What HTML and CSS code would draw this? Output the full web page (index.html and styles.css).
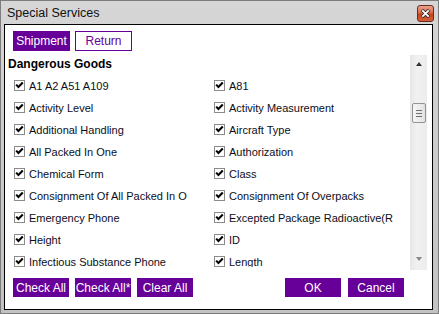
FILE: index.html
```html
<!DOCTYPE html>
<html>
<head>
<meta charset="utf-8">
<link rel="stylesheet" href="styles.css">
</head>
<body>
<div class="window">
  <div class="titlebar">
    <span class="title">Special Services</span>
    <span class="close"><svg width="9" height="9" viewBox="0 0 9 9"><path d="M1 1 L8 8 M8 1 L1 8" stroke="#3a2a2a" stroke-width="3.4"/><path d="M1.3 1.3 L7.7 7.7 M7.7 1.3 L1.3 7.7" stroke="#fff" stroke-width="1.8"/></svg></span>
  </div>
  <div class="panel">
    <div class="tabs">
      <span class="btn">Shipment</span>
      <span class="btn outline">Return</span>
    </div>
    <div class="listarea">
      <div class="list">
        <div class="heading">Dangerous Goods</div>
        <div class="grid">
          <label class="item"><span class="cb"></span>A1 A2 A51 A109</label>
          <label class="item"><span class="cb"></span>A81</label>
          <label class="item"><span class="cb"></span>Activity Level</label>
          <label class="item"><span class="cb"></span>Activity Measurement</label>
          <label class="item"><span class="cb"></span>Additional Handling</label>
          <label class="item"><span class="cb"></span>Aircraft Type</label>
          <label class="item"><span class="cb"></span>All Packed In One</label>
          <label class="item"><span class="cb"></span>Authorization</label>
          <label class="item"><span class="cb"></span>Chemical Form</label>
          <label class="item"><span class="cb"></span>Class</label>
          <label class="item"><span class="cb"></span>Consignment Of All Packed In O</label>
          <label class="item"><span class="cb"></span>Consignment Of Overpacks</label>
          <label class="item"><span class="cb"></span>Emergency Phone</label>
          <label class="item"><span class="cb"></span>Excepted Package Radioactive(R</label>
          <label class="item"><span class="cb"></span>Height</label>
          <label class="item"><span class="cb"></span>ID</label>
          <label class="item"><span class="cb"></span>Infectious Substance Phone</label>
          <label class="item"><span class="cb"></span>Length</label>
        </div>
      </div>
      <div class="scrollbar">
        <span class="arrow up"></span>
        <span class="thumb"><i></i><i></i><i></i></span>
        <span class="arrow down"></span>
      </div>
    </div>
    <div class="footer">
      <div class="group">
        <span class="btn">Check All</span>
        <span class="btn">Check All*</span>
        <span class="btn">Clear All</span>
      </div>
      <div class="group">
        <span class="btn">OK</span>
        <span class="btn">Cancel</span>
      </div>
    </div>
  </div>
</div>
</body>
</html>
```
FILE: styles.css
```css
html, body {
  margin: 0;
  padding: 0;
  background: #c8c8c8;
}
.window {
  width: 439px;
  height: 314px;
  box-sizing: border-box;
  border: 1px solid #7c7c7c;
  background: linear-gradient(to bottom, #d6d6d6 0%, #c9c9c9 60%, #c2c2c2 100%);
  display: flex;
  flex-direction: column;
  font-family: "Liberation Sans", Arial, sans-serif;
}
.titlebar {
  height: 23px;
  flex: none;
  display: flex;
  align-items: center;
  justify-content: space-between;
  padding: 0 4px 0 6px;
}
.title {
  font-family: "Liberation Sans", Arial, sans-serif;
  font-size: 12.5px;
  color: #111;
  margin-top: 1px;
}
.close {
  width: 15px;
  height: 15px;
  border: 1px solid #6b2b1c;
  border-radius: 3px;
  background: linear-gradient(to bottom, #e9a38c 0%, #d86a4c 45%, #c4431f 55%, #d5603d 100%);
  display: flex;
  align-items: center;
  justify-content: center;
  margin-top: 2px;
}
.panel {
  flex: 1;
  margin: 0 5px 3px 3px;
  border: 1px solid #000;
  background: #fff;
  display: flex;
  flex-direction: column;
}
.tabs {
  display: flex;
  gap: 5px;
  padding: 6px 0 4px 8px;
}
.btn {
  box-sizing: border-box;
  width: 57px;
  height: 20px;
  background: #660099;
  color: #fff;
  font-size: 12px;
  display: flex;
  align-items: center;
  justify-content: center;
}
.btn.outline {
  background: #fff;
  color: #660099;
  border: 1px solid #660099;
}
.listarea {
  height: 215px;
  display: flex;
  margin-right: 5px;
}
.list {
  flex: 1;
  height: 212px;
  overflow: hidden;
}
.heading {
  height: 20px;
  line-height: 19px;
  padding-left: 3px;
  font-size: 12px;
  font-weight: bold;
  color: #000;
}
.grid {
  display: grid;
  grid-template-columns: 200px 1fr;
  grid-auto-rows: 22px;
  padding-left: 9px;
}
.item {
  display: flex;
  align-items: center;
  gap: 4px;
  font-size: 11px;
  color: #0d0d1a;
  white-space: nowrap;
}
.cb {
  width: 11px;
  height: 11px;
  box-sizing: border-box;
  border: 1px solid #8b8b8b;
  background: #fff url("data:image/svg+xml;utf8,<svg xmlns='http://www.w3.org/2000/svg' width='9' height='9'><path d='M1.2 3.6 L3.4 6 L7.8 1.4' fill='none' stroke='black' stroke-width='2.1'/></svg>") center/9px 9px no-repeat;
  flex: none;
  margin-top: -1px;
}
.scrollbar {
  width: 17px;
  background: linear-gradient(to right, #e6e6e6, #f1f1f1 40%, #ececec);
  display: flex;
  flex-direction: column;
  align-items: center;
}
.arrow {
  width: 0;
  height: 0;
  border-left: 3.5px solid transparent;
  border-right: 3.5px solid transparent;
}
.arrow.up {
  border-bottom: 4px solid #333;
  margin-top: 7px;
}
.arrow.down {
  border-top: 4px solid #888;
  margin-top: auto;
  margin-bottom: 9px;
}
.thumb {
  box-sizing: border-box;
  width: 14px;
  height: 20px;
  margin-top: 37px;
  border: 1px solid #939393;
  border-radius: 2px;
  background: linear-gradient(to right, #f6f6f6, #e2e2e2);
  display: flex;
  flex-direction: column;
  align-items: center;
  justify-content: center;
  gap: 2px;
}
.thumb i {
  display: block;
  width: 6px;
  height: 1px;
  background: #6f6f6f;
}
.footer {
  display: flex;
  justify-content: space-between;
  padding: 8px 28px 0 8px;
}
.group {
  display: flex;
  gap: 6px;
}
.footer .btn {
  width: 56px;
  height: 19px;
}
.footer .group + .group .btn:first-child {
  margin-right: 1px;
}
```
